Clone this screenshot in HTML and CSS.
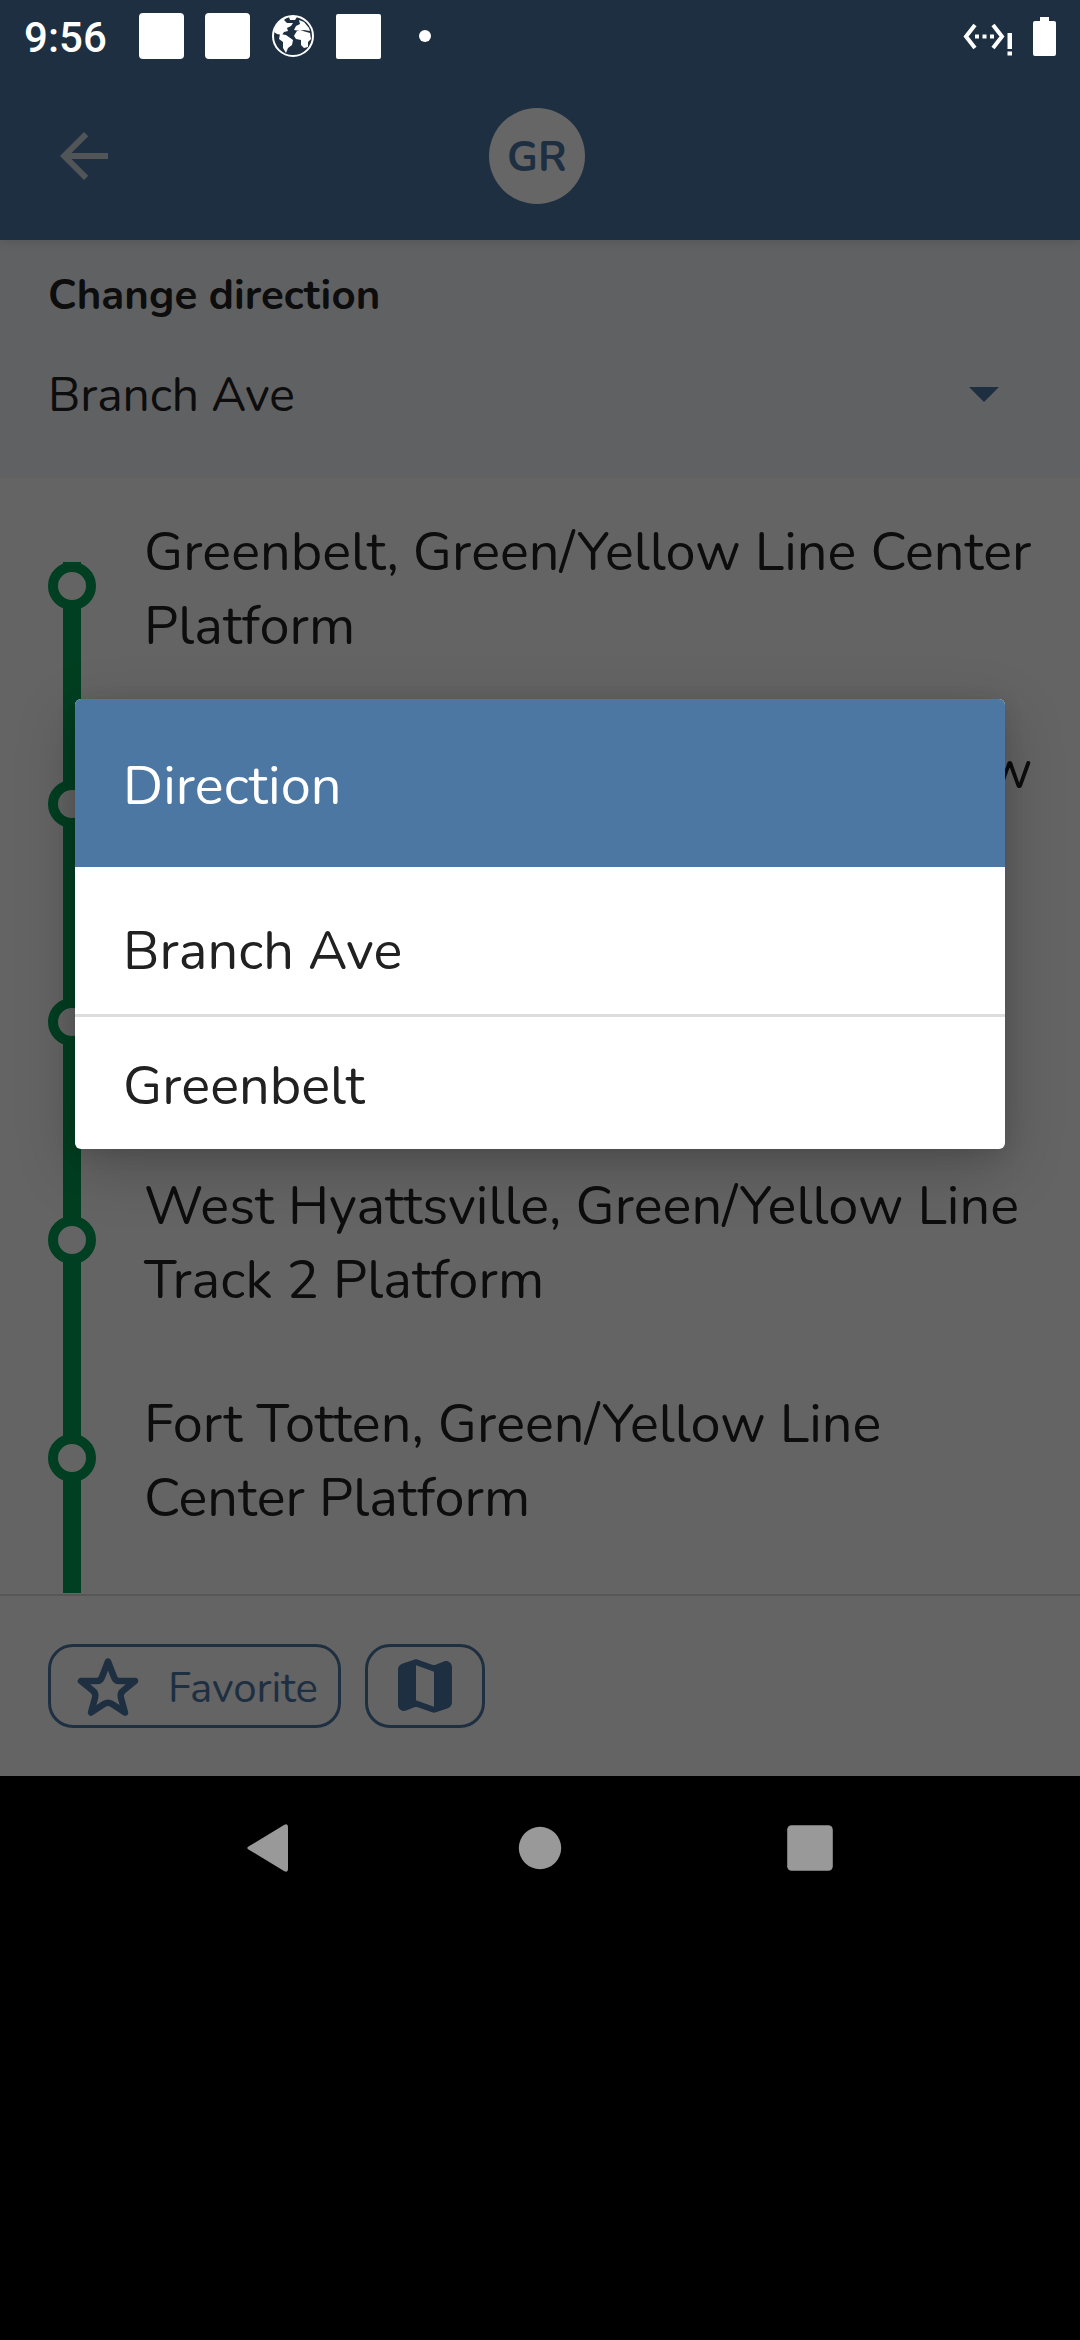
FILE: index.html
```html
<!DOCTYPE html>
<html lang="en">
<head>
<meta charset="utf-8">
<title>Change direction</title>
<link rel="stylesheet" href="styles.css">
</head>
<body>
<div class="app">
  <header class="toolbar">
    <svg class="back" viewBox="0 0 24 24"><path d="M20 11H7.83l5.59-5.59L12 4l-8 8 8 8 1.41-1.41L7.83 13H20v-2z"/></svg>
    <div class="badge"><span>GR</span></div>
  </header>

  <section class="panel">
    <h1 class="panel-title">Change direction</h1>
    <div class="select">
      <span>Branch Ave</span>
      <svg class="caret" viewBox="0 0 30 15"><path d="M0 0h30L15 15z"/></svg>
    </div>
  </section>

  <ul class="stops">
    <li class="stop"><span class="rail"><i class="dot"></i></span><span>Greenbelt, Green/Yellow Line Center<br>Platform</span></li>
    <li class="stop"><span class="rail"><i class="dot"></i></span><span>College Park-U Of Md, Green/Yellow<br>Line Center Platform</span></li>
    <li class="stop"><span class="rail"><i class="dot"></i></span><span>Hyattsville Crossing,<br>Center Platform</span></li>
    <li class="stop"><span class="rail"><i class="dot"></i></span><span>West Hyattsville, Green/Yellow Line<br>Track 2 Platform</span></li>
    <li class="stop"><span class="rail"><i class="dot"></i></span><span>Fort Totten, Green/Yellow Line<br>Center Platform</span></li>
    <li class="stop"><span class="rail"></span></li>
  </ul>

  <footer class="actions">
    <button class="action favorite">
      <svg class="icon" viewBox="0 0 72 72"><path class="star" d="M36 11.5L42 27q1.500 4 5 4h16L52 40q-4.500 3-3 8l4 14.500L40 54q-4-2.500-8 0l-13 8.500L23 48q1.500-5-3-8L9 31h16q3.500 0 5-4z"/></svg>
      <span>Favorite</span>
    </button>
    <button class="action map">
      <svg class="icon" viewBox="0 0 24 24"><path d="M14.650 4.980l-5-1.750c-.42-.15-.88-.15-1.300-.01L4.360 4.560C3.550 4.840 3 5.600 3 6.460v11.850c0 1.410 1.410 2.370 2.720 1.860l2.930-1.140c.22-.09.47-.09.69-.01l5 1.750c.42.15.88.15 1.300.01l3.990-1.340c.81-.27 1.360-1.040 1.360-1.900V5.690c0-1.410-1.410-2.370-2.720-1.860l-2.930 1.140c-.22.08-.46.09-.69.01zM15 18.890l-6-2.110V5.110l6 2.110v11.670z"/></svg>
    </button>
  </footer>

  <div class="scrim">
    <div class="dialog">
      <h2 class="dialog-title">Direction</h2>
      <div class="option option-first">Branch Ave</div>
      <div class="option">Greenbelt</div>
    </div>
  </div>

  <div class="status">
    <span class="clock">9:56</span>
    <i class="tile"></i>
    <i class="tile"></i>
    <svg class="globe" viewBox="0 0 42 42">
      <circle cx="21" cy="21" r="20" fill="none" stroke="#fff" stroke-width="2"/>
      <path fill="#fff" d="M2 17C4 9 9 4 15 2l-3 3 3 3 6 0-2 3-4 2 1 3-4 1-2 3-5-1zM8 19l6 1 7 5-1 5-4 3-2 5-3-5 0-6-4-3zM23 19l2-3 6 0 7 2 1 6-3 3 0 5-4 1-3-3 0-5-5-1-2-3zM22 15l2-4 4-2-1-4 5 2 5 6 1 3-6-1-4 1zM17 2l8 0-2 3-5 0z"/>
    </svg>
    <i class="tile tile-last"></i>
    <i class="more"></i>
    <svg class="ethernet" viewBox="0 0 50 34">
      <path fill="none" stroke="#fff" stroke-width="4" d="M12 3L3 14.500 12 26M30 3l9 11.500L30 26"/>
      <path fill="#fff" d="M12 12.500h4v4h-4zM19.500 12.500h4v4h-4zM27 12.500h4v4h-4zM44.500 11h4.500v16h-4.500zM44.500 29.500h4.500v4h-4.500z"/>
    </svg>
    <svg class="battery" viewBox="0 0 23 39"><path fill="#fff" d="M7 0h9v4h5q2 0 2 2v31q0 2-2 2H2q-2 0-2-2V6q0-2 2-2h5z"/></svg>
  </div>
</div>

<nav class="navbar">
  <svg class="nav-icon" viewBox="0 0 48 48"><path d="M2.500 22.500L38 1q4-2 4 2v42q0 4-4 2L2.500 25.500q-2.500-1.500 0-3z"/></svg>
  <svg class="nav-icon" viewBox="0 0 48 48"><circle cx="24" cy="24" r="21.200"/></svg>
  <svg class="nav-icon" viewBox="0 0 48 48"><rect x="1.200" y="1.200" width="45.600" height="45.600" rx="4.500"/></svg>
</nav>
</body>
</html>
```
FILE: styles.css
```css
* { box-sizing: border-box; }

body {
  margin: 0;
  width: 1080px;
  height: 2340px;
  overflow: hidden;
  background: #000;
  color: #212121;
  font-family: Nunito, Lato, "Noto Sans", sans-serif;
  font-size: 54px;
  line-height: 74px;
  letter-spacing: 0.08px;
}

.app {
  position: relative;
  display: flex;
  flex-direction: column;
  height: 1776px;
  overflow: hidden;
  background: #fafafa;
}

/* Toolbar */
.toolbar {
  position: relative;
  z-index: 1;
  flex: none;
  display: grid;
  grid-template-columns: 1fr 96px 1fr;
  align-items: center;
  height: 240px;
  padding: 72px 54px 0 48px;
  background: #4d77a3;
  box-shadow: 0 1px 10px rgba(0, 0, 0, 0.14);
}
.back { width: 72px; height: 72px; fill: #cbd5dd; }
.badge {
  height: 96px;
  padding-top: 3px;
  border-radius: 50%;
  background: #fff;
  color: #4d77a3;
  font-size: 42px;
  font-weight: 700;
  line-height: 94px;
  text-align: center;
}

/* Direction picker */
.panel {
  flex: none;
  height: 238px;
  padding: 27px 48px 0;
  background: #f0f2f5;
}
.panel-title { margin: 0; font-size: 42px; font-weight: 700; line-height: 58px; }
.select {
  display: flex;
  align-items: center;
  justify-content: space-between;
  margin-top: 37px;
  padding-right: 33px;
  font-size: 48px;
  line-height: 66px;
  letter-spacing: -0.1px;
}
.caret { width: 30px; height: 15px; margin-bottom: 1px; fill: #4d77a3; }

/* Stop list */
.stops {
  flex: none;
  height: 1115px;
  margin: 0;
  padding: 2px 0 0;
  overflow: hidden;
  list-style: none;
}
.stop {
  display: flex;
  gap: 48px;
  height: 218px;
  padding: 0 0 0 48px;
  white-space: nowrap;
}
.stop > span:last-child { padding-top: 35px; }
.stop > .rail {
  flex: none;
  width: 48px;
  padding-top: 82px;
  background: linear-gradient(#009d54, #009d54) 15px 0 / 18px 100% no-repeat;
}
.stop:first-child > .rail { background-position: 15px 82px; }
.dot {
  display: block;
  width: 48px;
  height: 48px;
  border: 10px solid #009d54;
  border-radius: 50%;
  background: #fafafa;
}

/* Bottom actions */
.actions {
  flex: 1;
  display: flex;
  align-items: flex-start;
  gap: 24px;
  margin-top: 1px;
  padding: 48px 48px 0;
  border-top: 2px solid #dadada;
}
.action {
  display: flex;
  align-items: center;
  height: 84px;
  padding: 0;
  border: 3px solid #4d77a3;
  border-radius: 25px;
  background: none;
  color: #4d77a3;
  font: 42px/58px Nunito, Lato, "Noto Sans", sans-serif;
}
.favorite { width: 293px; padding-left: 21px; letter-spacing: -0.1px; }
.favorite span { margin-left: 24px; padding-top: 5px; }
.map { width: 120px; justify-content: center; }
.icon { width: 72px; height: 72px; fill: #4d77a3; }
.star { fill: none; stroke: #4d77a3; stroke-width: 6.5; stroke-linejoin: round; }

/* Dialog over the dimmed screen */
.scrim {
  position: absolute;
  inset: 0;
  z-index: 2;
  display: flex;
  align-items: center;
  justify-content: center;
  padding-top: 72px;
  background: rgba(0, 0, 0, 0.6);
}
.dialog {
  width: 930px;
  height: 450px;
  overflow: hidden;
  border-radius: 6px;
  background: #fff;
  box-shadow: 0 18px 60px rgba(0, 0, 0, 0.22), 0 4px 20px rgba(0, 0, 0, 0.1);
}
.dialog-title {
  height: 168px;
  margin: 0;
  padding: 50px 48px 0;
  background: #4d77a3;
  color: #fff;
  font-size: 54px;
  font-weight: 400;
}
.option { padding: 32px 48px 0; }
.option-first { height: 150px; padding-top: 47px; border-bottom: 3px solid #ddd; }

/* System status bar */
.status {
  position: absolute;
  inset: 0 0 auto;
  z-index: 3;
  display: flex;
  align-items: center;
  height: 72px;
  padding: 0 24px;
  color: #fff;
}
.clock { width: 115px; font: 500 42px/72px Roboto, sans-serif; padding-top: 3px; }
.tile { width: 45px; height: 46px; margin-right: 21px; border-radius: 4px; background: #fff; }
.globe { width: 42px; height: 42px; margin: 0 22px 0 1px; }
.tile-last { height: 45px; margin-right: 38px; border-radius: 2px; }
.more { width: 12px; height: 12px; border-radius: 50%; background: #fff; }
.ethernet { width: 50px; height: 34px; margin: 6px 20px 0 auto; }
.battery { width: 23px; height: 39px; }

/* System navigation bar */
.navbar {
  display: flex;
  justify-content: center;
  gap: 222px;
  padding-top: 48px;
}
.nav-icon { width: 48px; height: 48px; fill: #999; }
```
